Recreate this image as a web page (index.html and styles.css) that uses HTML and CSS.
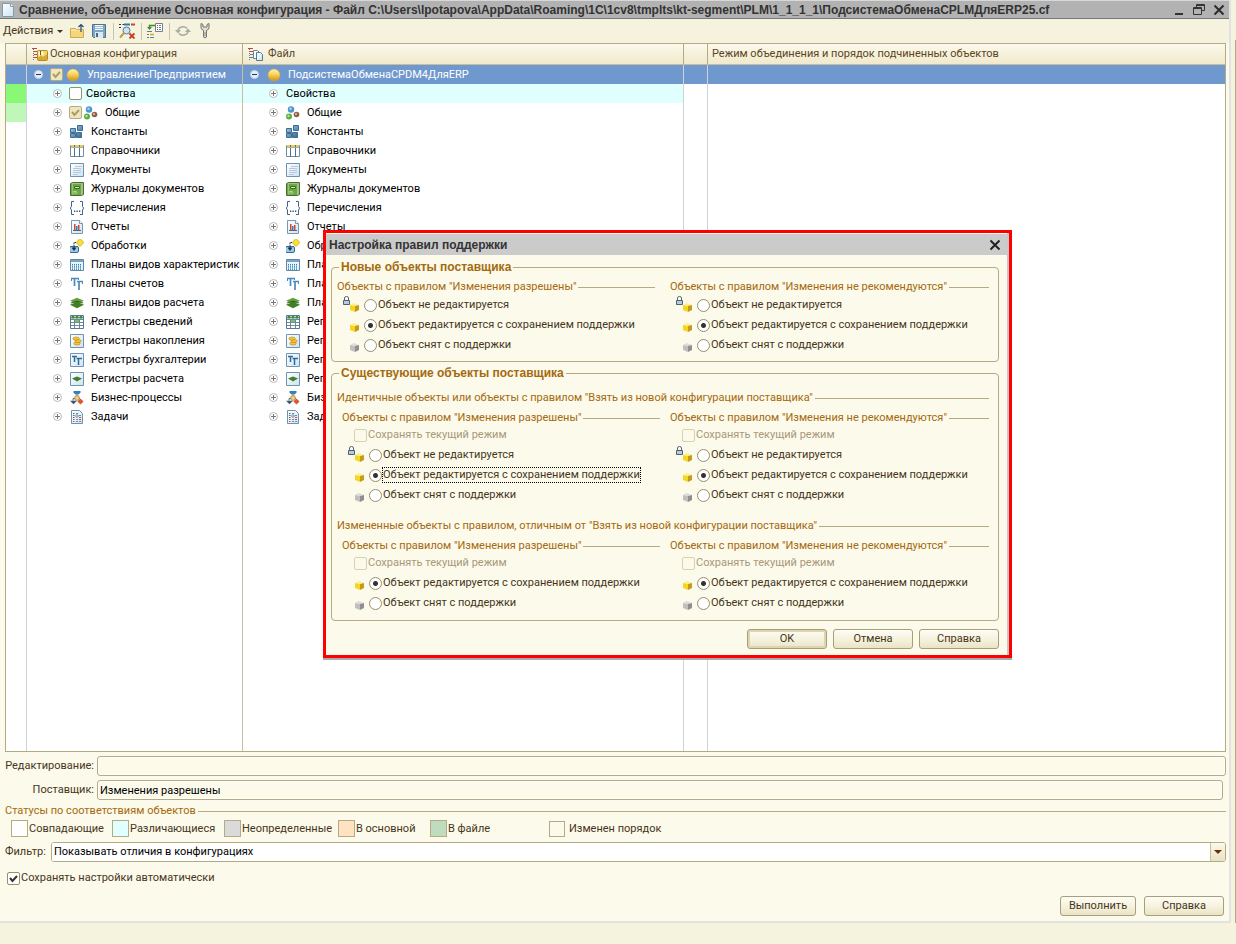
FILE: index.html
```html
<!DOCTYPE html>
<html lang="ru">
<head>
<meta charset="utf-8">
<title>Сравнение, объединение</title>
<link rel="stylesheet" href="styles.css">
</head>
<body>
<svg class="defs" aria-hidden="true">
<defs>
<linearGradient id="gold" x1="0" y1="0" x2="0" y2="1"><stop offset="0" stop-color="#fff6b8"/><stop offset=".45" stop-color="#f8d35a"/><stop offset="1" stop-color="#d08f14"/></linearGradient>
<linearGradient id="blue" x1="0" y1="0" x2="1" y2="1"><stop offset="0" stop-color="#a9cfe8"/><stop offset="1" stop-color="#2f648e"/></linearGradient>
<linearGradient id="paper" x1="0" y1="0" x2="1" y2="1"><stop offset="0" stop-color="#fff"/><stop offset="1" stop-color="#cfe2f0"/></linearGradient>
</defs>
<symbol id="plus" viewBox="0 0 9 9"><circle cx="4.5" cy="4.5" r="4" fill="#fff" stroke="#b9b9b9"/><path d="M2 4.5h5M4.5 2v5" stroke="#777"/></symbol>
<symbol id="minus" viewBox="0 0 9 9"><circle cx="4.5" cy="4.5" r="4" fill="#e4ecf6" stroke="#c4d2e6"/><path d="M2 4.5h5" stroke="#223a5c"/></symbol>
<symbol id="ball" viewBox="0 0 14 14"><circle cx="7" cy="7" r="6" fill="url(#gold)" stroke="#d9a63c" stroke-width=".6"/></symbol>
<symbol id="common" viewBox="0 0 14 14"><circle cx="5" cy="3.500" r="3.200" fill="#4c96cf"/><circle cx="4.500" cy="2.700" r="1.300" fill="#a5d2ef"/><circle cx="3" cy="10.500" r="3" fill="#58b03c"/><circle cx="2.500" cy="10" r="1.200" fill="#b2e59c"/><circle cx="10.500" cy="8.500" r="2.800" fill="#8c5f45"/><circle cx="10" cy="8" r="1.200" fill="#d2ac92"/></symbol>
<symbol id="const" viewBox="0 0 14 14"><path d="M7.500 .5h5v5h-5zM.5 3.500h5v4h-5zM.5 8.500h5v4h-5zM6.500 7.500h5v5h-5z" fill="url(#blue)" stroke="#3c6c93"/></symbol>
<symbol id="catalog" viewBox="0 0 14 14"><path d="M.5 1.500h13v11H.5z" fill="#fff" stroke="#6f8fa8"/><path d="M1 1h12v2H1z" fill="#f3cc39"/><path d="M4.500 1v12M9.500 1v12" stroke="#4e7391"/><path d="M1 3.500h12" stroke="#9db2c2"/></symbol>
<symbol id="doc" viewBox="0 0 14 14"><path d="M.5 .5h13v13H.5z" fill="url(#paper)" stroke="#6f94b3"/><path d="M5 3.500h7M3 5.500h8M3 7.500h8M3 9.500h8M3 11.500h5" stroke="#b4cadc"/></symbol>
<symbol id="journal" viewBox="0 0 14 14"><path d="M2.500 .5h11v12l-2 1H.5v-12z" fill="#a5bf85" stroke="#496c30"/><path d="M1 2h10v11H1z" fill="#6aa846"/><path d="M4.500 4.500h5v2h-5z" fill="#d7ebbb" stroke="#376d1a"/><path d="M3.500 9.500h3M3.500 11h4" stroke="#b8dc9a"/><path d="M2.500 2v11" stroke="#91c86e"/></symbol>
<symbol id="enum" viewBox="0 0 14 14"><path d="M4 .5H1.500v5L.3 7l1.200 2v4.500H4M10 .5h2.500v5L13.700 7l-1.200 2v4.500H10" fill="none" stroke="#3f6585"/><path d="M4 9.500h1.300v1.500H4zM6.500 9.500h1.300v1.500H6.500zM9 9.500h1.300v1.500H9z" fill="#2c5272"/></symbol>
<symbol id="report" viewBox="0 0 14 14"><path d="M1.500 .5h8l3 3v10h-11z" fill="url(#paper)" stroke="#7897b1"/><path d="M9.500 .5v3h3" fill="#fff" stroke="#7897b1"/><path d="M4 4h1.500v6H4zM8 5h1.500v5H8z" fill="#d5472f"/><path d="M6 6h1.500v4H6z" fill="#2e7fb3"/><path d="M3 10.500h8" stroke="#4c6a82"/></symbol>
<symbol id="process" viewBox="0 0 14 14"><rect x="-.5" y="7.500" width="9" height="6" rx="1.500" fill="#9bcae8" stroke="#356c94"/><path d="M10 -.5l4 4-4 4-4-4z" fill="#f8e032" stroke="#c79d17" stroke-width=".7"/><path d="M6 3.500H4V11" stroke="#172d42" fill="none" stroke-dasharray="1.500 .7"/><path d="M1.500 8.500h5L4 12z" fill="#172d42"/></symbol>
<symbol id="chars" viewBox="0 0 14 14"><path d="M.5 1.500h13v11H.5z" fill="#e8f3fa" stroke="#6489a8"/><path d="M1 2h12v2H1z" fill="#7aa2c2"/><path d="M2.500 6v6M4.500 6v6M6.500 6v6M8.500 6v6M10.500 6v6" stroke="#2f85b8" stroke-dasharray="1.500 .7"/></symbol>
<symbol id="accounts" viewBox="0 0 14 14"><path d="M1 1.500h8M4.500 1v8M7 4.500h6M9 4v9" stroke="#4a89ba" stroke-width="1.700"/><path d="M1.500 1v3M8.500 1v2M12.500 4v3" stroke="#4a89ba"/></symbol>
<symbol id="calc" viewBox="0 0 16 14"><path d="M0 4.500L8 1l8 3.500L8 8z" fill="#5fa33d"/><path d="M0 9l8-3.500L16 9l-8 4z" fill="#417f26"/><path d="M1 7l7-2 7 2" fill="none" stroke="#245115"/></symbol>
<symbol id="info" viewBox="0 0 14 14"><path d="M.5 .5h13v13H.5z" fill="#fff" stroke="#567b98"/><path d="M1 1h12v2.500H1z" fill="#b9cfdd"/><path d="M1.500 3l1.500-2 1.500 2zM5.500 3L7 1l1.500 2zM9.500 3L11 1l1.500 2z" fill="#3e8b28" stroke="#3e8b28"/><path d="M1 4.500h12M1 7.500h12M1 10.500h12M4.500 4v9M9.500 4v9" stroke="#6d879c"/><path d="M5 5h4v2H5z" fill="#7cc05d"/></symbol>
<symbol id="accum" viewBox="0 0 14 14"><path d="M.5 .5h13v13H.5z" fill="url(#paper)" stroke="#6f94b3"/><g fill="#f3c63c" stroke="#b5820e" stroke-width=".6"><ellipse cx="7" cy="9.500" rx="3.200" ry="1.500"/><ellipse cx="8" cy="7" rx="3.200" ry="1.500"/><ellipse cx="6" cy="4.500" rx="3.200" ry="1.500"/></g></symbol>
<symbol id="booking" viewBox="0 0 14 14"><path d="M.5 .5h13v13H.5z" fill="url(#paper)" stroke="#6f94b3"/><path d="M2 3.500h5M4.500 3v6M6.500 5.500H12M8.500 5v7" stroke="#2b6b9d" stroke-width="1.500"/></symbol>
<symbol id="calcreg" viewBox="0 0 14 14"><path d="M.5 .5h13v13H.5z" fill="url(#paper)" stroke="#6f94b3"/><path d="M2 6.500l5-2 5 2-5 3z" fill="#418029"/></symbol>
<symbol id="business" viewBox="0 0 16 16"><path d="M4 0h8v2L9.500 4h-3L4 2z" fill="#3580b4"/><path d="M8 4v2M3.500 11V8.500h8" stroke="#36576f" fill="none"/><rect x="5.500" y="5.500" width="5" height="5" rx="1.500" fill="#f2d184" stroke="#ab864c"/><path d="M0 11h8l-4 4z" fill="#43576b"/><path d="M12 8.500l3.500 3.500-3.500 3.500L8.500 12z" fill="#e1552e"/></symbol>
<symbol id="tasks" viewBox="0 0 14 14"><path d="M1.500 .5h8l3 3v10h-11z" fill="url(#paper)" stroke="#6f94b3"/><path d="M3 3.500h1.500M3 5.500h1.500M3 7.500h1.500" stroke="#47647e"/><path d="M3 9.500h1.500M3 11.500h1.500M9 7.500h2M9 9.500h2" stroke="#d2562c"/><path d="M6 3.500h2M6 9.500h2M6 11.500h2M9 11.500h2M9 5.500h2" stroke="#5d91bb"/><circle cx="7" cy="6" r="1.300" fill="none" stroke="#5d7d95" stroke-width=".8"/></symbol>
<symbol id="cube" viewBox="0 0 9 9"><path d="M0 2l4-2 5 2-4 1z" fill="#fff18a"/><path d="M0 2l5 1v6L0 7z" fill="#f4d724"/><path d="M9 2L5 3v6l4-2z" fill="#c69a1c"/></symbol>
<symbol id="graycube" viewBox="0 0 9 9"><path d="M0 2l4-2 5 2-4 1z" fill="#ddd"/><path d="M0 2l5 1v6L0 7z" fill="#bfbfbf"/><path d="M9 2L5 3v6l4-2z" fill="#8f8f8f"/></symbol>
<symbol id="lock" viewBox="0 0 7 9"><path d="M1.500 4V2q0-1.500 2-1.500t2 1.500v2" fill="none" stroke="#53677b"/><path d="M.5 4.500h6v4h-6z" fill="#b9cbd9" stroke="#4b6075"/></symbol>
<symbol id="cfg" viewBox="0 0 16 14"><path d="M0 1.500h5M2 4.500h4M2 7.500h4M2 10.500h4" stroke="#c44830"/><path d="M1.500 2v11" stroke="#6a7c8a" stroke-dasharray="1 1"/><rect x="5.500" y="3.500" width="10" height="10" rx="1" fill="#f1d870" stroke="#b08a2a"/><path d="M6.500 4.500h5v4h-5z" fill="#fff7cb"/><path d="M6 11l3-3 2 2 4-3v6H6z" fill="#d8a930"/><path d="M8.500 4v4" stroke="#60563a"/></symbol>
<symbol id="filecfg" viewBox="0 0 16 14"><path d="M0 1.500h5M2 4.500h3" stroke="#c44830"/><path d="M2 7.500h3M2 10.500h3" stroke="#5e7d95"/><path d="M1.500 2v11" stroke="#6a7c8a" stroke-dasharray="1 1"/><path d="M5.500 3.500h4l2 2v6h-6z" fill="#fff" stroke="#66859d"/><path d="M8.500 5.500h4l2 2v6h-6z" fill="url(#paper)" stroke="#547995"/></symbol>
</svg>

<main class="window">
<header class="titlebar">
<svg class="i14" viewBox="0 0 14 14"><path d="M1.500 .5h8l3 3v10h-11z" fill="url(#paper)" stroke="#7c9cb4"/><path d="M9.500 .5v3h3" fill="#fff" stroke="#7c9cb4"/></svg>
<h1>Сравнение, объединение Основная конфигурация - Файл C:\Users\lpotapova\AppData\Roaming\1C\1cv8\tmplts\kt-segment\PLM\1_1_1_1\ПодсистемаОбменаCPLMДляERP25.cf</h1>
<div class="winbtns">
<button type="button" aria-label="Свернуть"><svg viewBox="0 0 12 12"><path d="M2 10h8" stroke="#333" stroke-width="2"/></svg></button>
<button type="button" aria-label="Восстановить"><svg viewBox="0 0 12 12"><path d="M3.500 3.500v-3h8v6H9M3 1.500h9" fill="none" stroke="#333"/><path d="M.5 3.500h8v7h-8zM0 4.500h9" fill="none" stroke="#333"/></svg></button>
<button type="button" aria-label="Закрыть"><svg viewBox="0 0 12 12"><path d="M1.500 1.500l9 9M10.500 1.500l-9 9" stroke="#2c2c2c" stroke-width="2"/></svg></button>
</div>
</header>

<nav class="toolbar">
<button type="button" class="actions">Действия <i class="caret"></i></button>
<button type="button" aria-label="Открыть"><svg viewBox="0 0 16 16"><path d="M1.500 5.500h5l1 1h7v8h-13z" fill="#f9e29a" stroke="#cfa850"/><path d="M2 8h12v6H2z" fill="#f5d67c"/><path d="M12 9V1.500M9.500 4L12 1.500 14.500 4" fill="none" stroke="#244d75" stroke-width="1.200"/></svg></button>
<button type="button" aria-label="Сохранить"><svg viewBox="0 0 16 16"><path d="M1.500 1.500h13v13h-12l-1-1z" fill="#7fa6c4" stroke="#4d7392"/><path d="M4 2h8v5H4z" fill="#f4f9fc"/><path d="M4 3.500h8M4 5.500h8" stroke="#a5bccd"/><path d="M4 9h8v6H4z" fill="#dde8f0"/><path d="M5 10h2v4H5z" fill="#426987"/></svg></button>
<span class="sep"></span>
<button type="button" aria-label="Фильтр"><svg viewBox="0 0 16 16"><path d="M0 1.500h2M3.500 1.500h2M0 4.500h2" stroke="#333"/><path d="M12 1.500h4" stroke="#cf442d" stroke-width="2"/><path d="M5 1.500h6" stroke="#2b78c2" stroke-width="2"/><circle cx="7.500" cy="7.500" r="3.500" fill="#cde3f2" stroke="#587b98"/><path d="M5 10l-4 4.500" stroke="#c4984a" stroke-width="2"/><path d="M10.500 10.500l5 5M15.500 10.500l-5 5" stroke="#d3361e" stroke-width="1.800"/></svg></button>
<span class="sep"></span>
<button type="button" aria-label="Порядок"><svg viewBox="0 0 16 16"><path d="M8.500 .5h7v8h-7z" fill="#fff" stroke="#6d8394"/><path d="M10 2.500h1M10 4.500h1M10 6.500h1" stroke="#c44830"/><path d="M12 2.500h2M12 4.500h2M12 6.500h2" stroke="#69808f"/><path d="M2.500 5V2.500H8" fill="none" stroke="#3b8c29" stroke-width="1.500"/><path d="M0 4h5L2.500 7z" fill="#3b8c29"/><path d="M0 8.500h5M0 11.500h2M0 14.500h2" stroke="#6b7b86"/><path d="M3 11.500h4" stroke="#e0a52d" stroke-width="1.500"/><path d="M3 14.500h4" stroke="#3f87bc"/></svg></button>
<span class="sep"></span>
<button type="button" aria-label="Обновить"><svg viewBox="0 0 16 16"><path d="M3 7.500a5 4 0 0 1 9-2M13 8.500a5 4 0 0 1-9 2" fill="none" stroke="#a9ab9e" stroke-width="1.500"/><path d="M0 7h6l-3 3.500zM10 9h6l-3-3.500z" fill="#a9ab9e"/></svg></button>
<button type="button" aria-label="Настройка"><svg viewBox="0 0 16 16"><path d="M4 .5v4q0 2 2.500 3V14q1.500 2 3 0V7.500q2.500-1 2.500-3v-4l-2 1V4H6V1.500z" fill="#deded8" stroke="#73736b"/><path d="M6.500 10h3M6.500 12h3" stroke="#8a8a82"/></svg></button>
</nav>

<section class="content">
<div class="gridbox">
<table class="tree">
<colgroup><col class="c1"><col class="c2"><col class="c3"><col class="c4"><col></colgroup>
<thead><tr><th></th><th><div class="head"><svg><use href="#cfg"/></svg>Основная конфигурация</div></th><th><div class="head"><svg><use href="#filecfg"/></svg>Файл</div></th><th></th><th><div class="head mode">Режим объединения и порядок подчиненных объектов</div></th></tr></thead>
<tbody>
<tr class="root"><td></td><td><div class="node"><svg class="exp"><use href="#minus"/></svg><input type="checkbox" class="tan" checked aria-label="УправлениеПредприятием"><svg class="i14"><use href="#ball"/></svg><span>УправлениеПредприятием</span></div></td><td><div class="node"><svg class="exp"><use href="#minus"/></svg><svg class="i14"><use href="#ball"/></svg><span>ПодсистемаОбменаCPDM4ДляERP</span></div></td><td></td><td></td></tr>
<tr class="diff"><td></td><td><div class="node sub"><svg class="exp"><use href="#plus"/></svg><label><input type="checkbox">Свойства</label></div></td><td><div class="node sub"><svg class="exp"><use href="#plus"/></svg><span>Свойства</span></div></td><td></td><td></td></tr>
<tr class="part"><td></td><td><div class="node sub"><svg class="exp"><use href="#plus"/></svg><input type="checkbox" class="tan" checked aria-label="Общие"><svg class="i14"><use href="#common"/></svg><span>Общие</span></div></td><td><div class="node sub"><svg class="exp"><use href="#plus"/></svg><svg class="i14"><use href="#common"/></svg><span>Общие</span></div></td><td></td><td></td></tr>
<tr><td></td><td><div class="node sub"><svg class="exp"><use href="#plus"/></svg><svg class="i14"><use href="#const"/></svg><span>Константы</span></div></td><td><div class="node sub"><svg class="exp"><use href="#plus"/></svg><svg class="i14"><use href="#const"/></svg><span>Константы</span></div></td><td></td><td></td></tr>
<tr><td></td><td><div class="node sub"><svg class="exp"><use href="#plus"/></svg><svg class="i14"><use href="#catalog"/></svg><span>Справочники</span></div></td><td><div class="node sub"><svg class="exp"><use href="#plus"/></svg><svg class="i14"><use href="#catalog"/></svg><span>Справочники</span></div></td><td></td><td></td></tr>
<tr><td></td><td><div class="node sub"><svg class="exp"><use href="#plus"/></svg><svg class="i14"><use href="#doc"/></svg><span>Документы</span></div></td><td><div class="node sub"><svg class="exp"><use href="#plus"/></svg><svg class="i14"><use href="#doc"/></svg><span>Документы</span></div></td><td></td><td></td></tr>
<tr><td></td><td><div class="node sub"><svg class="exp"><use href="#plus"/></svg><svg class="i14"><use href="#journal"/></svg><span>Журналы документов</span></div></td><td><div class="node sub"><svg class="exp"><use href="#plus"/></svg><svg class="i14"><use href="#journal"/></svg><span>Журналы документов</span></div></td><td></td><td></td></tr>
<tr><td></td><td><div class="node sub"><svg class="exp"><use href="#plus"/></svg><svg class="i14"><use href="#enum"/></svg><span>Перечисления</span></div></td><td><div class="node sub"><svg class="exp"><use href="#plus"/></svg><svg class="i14"><use href="#enum"/></svg><span>Перечисления</span></div></td><td></td><td></td></tr>
<tr><td></td><td><div class="node sub"><svg class="exp"><use href="#plus"/></svg><svg class="i14"><use href="#report"/></svg><span>Отчеты</span></div></td><td><div class="node sub"><svg class="exp"><use href="#plus"/></svg><svg class="i14"><use href="#report"/></svg><span>Отчеты</span></div></td><td></td><td></td></tr>
<tr><td></td><td><div class="node sub"><svg class="exp"><use href="#plus"/></svg><svg class="i14"><use href="#process"/></svg><span>Обработки</span></div></td><td><div class="node sub"><svg class="exp"><use href="#plus"/></svg><svg class="i14"><use href="#process"/></svg><span>Обработки</span></div></td><td></td><td></td></tr>
<tr><td></td><td><div class="node sub"><svg class="exp"><use href="#plus"/></svg><svg class="i14"><use href="#chars"/></svg><span>Планы видов характеристик</span></div></td><td><div class="node sub"><svg class="exp"><use href="#plus"/></svg><svg class="i14"><use href="#chars"/></svg><span>Планы</span></div></td><td></td><td></td></tr>
<tr><td></td><td><div class="node sub"><svg class="exp"><use href="#plus"/></svg><svg class="i14"><use href="#accounts"/></svg><span>Планы счетов</span></div></td><td><div class="node sub"><svg class="exp"><use href="#plus"/></svg><svg class="i14"><use href="#accounts"/></svg><span>Планы</span></div></td><td></td><td></td></tr>
<tr><td></td><td><div class="node sub"><svg class="exp"><use href="#plus"/></svg><svg class="i14"><use href="#calc"/></svg><span>Планы видов расчета</span></div></td><td><div class="node sub"><svg class="exp"><use href="#plus"/></svg><svg class="i14"><use href="#calc"/></svg><span>Планы</span></div></td><td></td><td></td></tr>
<tr><td></td><td><div class="node sub"><svg class="exp"><use href="#plus"/></svg><svg class="i14"><use href="#info"/></svg><span>Регистры сведений</span></div></td><td><div class="node sub"><svg class="exp"><use href="#plus"/></svg><svg class="i14"><use href="#info"/></svg><span>Регистры</span></div></td><td></td><td></td></tr>
<tr><td></td><td><div class="node sub"><svg class="exp"><use href="#plus"/></svg><svg class="i14"><use href="#accum"/></svg><span>Регистры накопления</span></div></td><td><div class="node sub"><svg class="exp"><use href="#plus"/></svg><svg class="i14"><use href="#accum"/></svg><span>Регистры</span></div></td><td></td><td></td></tr>
<tr><td></td><td><div class="node sub"><svg class="exp"><use href="#plus"/></svg><svg class="i14"><use href="#booking"/></svg><span>Регистры бухгалтерии</span></div></td><td><div class="node sub"><svg class="exp"><use href="#plus"/></svg><svg class="i14"><use href="#booking"/></svg><span>Регистры</span></div></td><td></td><td></td></tr>
<tr><td></td><td><div class="node sub"><svg class="exp"><use href="#plus"/></svg><svg class="i14"><use href="#calcreg"/></svg><span>Регистры расчета</span></div></td><td><div class="node sub"><svg class="exp"><use href="#plus"/></svg><svg class="i14"><use href="#calcreg"/></svg><span>Регистры</span></div></td><td></td><td></td></tr>
<tr><td></td><td><div class="node sub"><svg class="exp"><use href="#plus"/></svg><svg class="i14"><use href="#business"/></svg><span>Бизнес-процессы</span></div></td><td><div class="node sub"><svg class="exp"><use href="#plus"/></svg><svg class="i14"><use href="#business"/></svg><span>Бизнес</span></div></td><td></td><td></td></tr>
<tr><td></td><td><div class="node sub"><svg class="exp"><use href="#plus"/></svg><svg class="i14"><use href="#tasks"/></svg><span>Задачи</span></div></td><td><div class="node sub"><svg class="exp"><use href="#plus"/></svg><svg class="i14"><use href="#tasks"/></svg><span>Задачи</span></div></td><td></td><td></td></tr>
<tr class="rest"><td></td><td></td><td></td><td></td><td></td></tr>
</tbody>
</table>
</div>

<div class="field"><label for="edit">Редактирование:</label><input id="edit" type="text" readonly></div>
<div class="field vendor"><label for="vendor">Поставщик:</label><input id="vendor" type="text" readonly value="Изменения разрешены"></div>
<h2 class="line">Статусы по соответствиям объектов</h2>
<ul class="statuses">
<li><i class="same"></i>Совпадающие</li><li><i class="differs"></i>Различающиеся</li><li><i class="unknown"></i>Неопределенные</li><li><i class="inmain"></i>В основной</li><li><i class="infile"></i>В файле</li><li class="order"><i></i>Изменен порядок</li>
</ul>
<div class="filter"><label for="filter">Фильтр:</label><div class="combo"><select id="filter"><option>Показывать отличия в конфигурациях</option></select><span class="drop"><i class="caret"></i></span></div></div>
<label class="auto"><input type="checkbox" checked>Сохранять настройки автоматически</label>
<div class="actionsrow"><button type="button" class="btn run">Выполнить</button><button type="button" class="btn">Справка</button></div>
</section>
</main>
<div class="edge"></div>

<section class="dialog" role="dialog" aria-labelledby="dlg">
<header><h2 id="dlg">Настройка правил поддержки</h2><button type="button" aria-label="Закрыть"><svg viewBox="0 0 12 12"><path d="M1.500 1.500l9 9M10.500 1.500l-9 9" stroke="#222" stroke-width="2"/></svg></button></header>
<div class="dbody">
<fieldset class="box new">
<legend>Новые объекты поставщика</legend>
<div class="cols">
<div class="rules"><h3 class="line">Объекты с правилом "Изменения разрешены"</h3>
<label><span class="ico"><svg class="lk"><use href="#lock"/></svg><svg class="cb"><use href="#cube"/></svg></span><input type="radio" name="a">Объект не редактируется</label>
<label><span class="ico"><svg class="cb"><use href="#cube"/></svg></span><input type="radio" name="a" checked>Объект редактируется с сохранением поддержки</label>
<label><span class="ico"><svg class="cb"><use href="#graycube"/></svg></span><input type="radio" name="a">Объект снят с поддержки</label></div>
<div class="rules"><h3 class="line">Объекты с правилом "Изменения не рекомендуются"</h3>
<label><span class="ico"><svg class="lk"><use href="#lock"/></svg><svg class="cb"><use href="#cube"/></svg></span><input type="radio" name="b">Объект не редактируется</label>
<label><span class="ico"><svg class="cb"><use href="#cube"/></svg></span><input type="radio" name="b" checked>Объект редактируется с сохранением поддержки</label>
<label><span class="ico"><svg class="cb"><use href="#graycube"/></svg></span><input type="radio" name="b">Объект снят с поддержки</label></div>
</div>
</fieldset>
<fieldset class="box existing">
<legend>Существующие объекты поставщика</legend>
<h3 class="line">Идентичные объекты или объекты с правилом "Взять из новой конфигурации поставщика"</h3>
<div class="cols inset">
<div class="rules"><h3 class="line">Объекты с правилом "Изменения разрешены"</h3>
<label class="keep"><input type="checkbox" disabled>Сохранять текущий режим</label>
<label><span class="ico"><svg class="lk"><use href="#lock"/></svg><svg class="cb"><use href="#cube"/></svg></span><input type="radio" name="c">Объект не редактируется</label>
<label><span class="ico"><svg class="cb"><use href="#cube"/></svg></span><input type="radio" name="c" checked><span class="focus">Объект редактируется с сохранением поддержки</span></label>
<label><span class="ico"><svg class="cb"><use href="#graycube"/></svg></span><input type="radio" name="c">Объект снят с поддержки</label></div>
<div class="rules"><h3 class="line">Объекты с правилом "Изменения не рекомендуются"</h3>
<label class="keep"><input type="checkbox" disabled>Сохранять текущий режим</label>
<label><span class="ico"><svg class="lk"><use href="#lock"/></svg><svg class="cb"><use href="#cube"/></svg></span><input type="radio" name="d">Объект не редактируется</label>
<label><span class="ico"><svg class="cb"><use href="#cube"/></svg></span><input type="radio" name="d" checked>Объект редактируется с сохранением поддержки</label>
<label><span class="ico"><svg class="cb"><use href="#graycube"/></svg></span><input type="radio" name="d">Объект снят с поддержки</label></div>
</div>
<h3 class="line second">Измененные объекты с правилом, отличным от "Взять из новой конфигурации поставщика"</h3>
<div class="cols inset">
<div class="rules"><h3 class="line">Объекты с правилом "Изменения разрешены"</h3>
<label class="keep"><input type="checkbox" disabled>Сохранять текущий режим</label>
<label><span class="ico"><svg class="cb"><use href="#cube"/></svg></span><input type="radio" name="e" checked>Объект редактируется с сохранением поддержки</label>
<label><span class="ico"><svg class="cb"><use href="#graycube"/></svg></span><input type="radio" name="e">Объект снят с поддержки</label></div>
<div class="rules"><h3 class="line">Объекты с правилом "Изменения не рекомендуются"</h3>
<label class="keep"><input type="checkbox" disabled>Сохранять текущий режим</label>
<label><span class="ico"><svg class="cb"><use href="#cube"/></svg></span><input type="radio" name="f" checked>Объект редактируется с сохранением поддержки</label>
<label><span class="ico"><svg class="cb"><use href="#graycube"/></svg></span><input type="radio" name="f">Объект снят с поддержки</label></div>
</div>
</fieldset>
<footer><button type="button" class="btn default">OK</button><button type="button" class="btn">Отмена</button><button type="button" class="btn">Справка</button></footer>
</div>
</section>
</body>
</html>
```
FILE: styles.css
```css
* { box-sizing: border-box; }
body {
  margin: 0;
  height: 100vh;
  display: flex;
  padding-bottom: 21px;
  background: #f5f2de;
  color: #46351c;
  font: 11px/14px Roboto, "Liberation Sans", sans-serif;
  overflow: hidden;
}
h1, h2, h3, ul { margin: 0; padding: 0; font: inherit; list-style: none; }
button, input, select { font: inherit; color: inherit; margin: 0; padding: 0; }
button { border: 0; background: none; }
.defs { position: absolute; width: 0; height: 0; }
.i14 { width: 14px; height: 14px; flex: none; overflow: visible; }

.window {
  flex: 1;
  min-width: 0;
  display: flex;
  flex-direction: column;
  background: #fcfaea;
  border-right: 2px solid #e2e2e4;
  border-bottom: 2px solid #e2e2e4;
}
.edge { width: 5px; margin-top: 40px; border-right: 1px solid #b5ab82; }
.titlebar {
  display: flex;
  align-items: center;
  height: 19px;
  padding: 0 4px 0 1px;
  gap: 4px;
  background: #b2b2b2;
  border-top: 1px solid #d8d8d8;
  border-bottom: 1px solid #777;
}
.titlebar h1 {
  flex: 1;
  font: bold 12px/14px "Liberation Sans", sans-serif;
  color: #333;
  white-space: nowrap;
}
.winbtns { display: flex; gap: 8px; }
.winbtns button, .winbtns svg { width: 12px; height: 12px; display: block; }

.toolbar {
  display: flex;
  align-items: center;
  height: 24px;
  padding-left: 3px;
  background: #f5f2de;
}
.toolbar button { margin-right: 6px; display: flex; align-items: center; }
.toolbar .actions { gap: 4px; }
.toolbar svg { width: 16px; height: 16px; }
.sep { width: 1px; height: 17px; margin-right: 5px; background: #c9c5b0; }
.caret {
  border: 3px solid transparent;
  border-top-color: #46351c;
  border-bottom: 0;
}

.content {
  flex: 1;
  min-height: 0;
  display: flex;
  flex-direction: column;
  padding: 0 3px 5px 5px;
}
.gridbox { flex: 1; min-height: 0; border: 1px solid #b5ab82; background: #fff; }
.tree { width: 100%; height: 100%; border-collapse: separate; border-spacing: 0; table-layout: fixed; color: #000; }
.c1 { width: 21px; }
.c2 { width: 216px; }
.c3 { width: 441px; }
.c4 { width: 24px; }
.tree th, .tree td { padding: 0; border-right: 1px solid #ccd3db; text-align: left; font-weight: normal; }
.tree td:nth-child(2) { border-right-color: #c6bf9c; }
.tree tr > :last-child { border-right: 0; }
.tree th {
  height: 21px;
  background: linear-gradient(#fbf9ec, #f1e9cc);
  border-right-color: #b5ab82;
  border-bottom: 1px solid #c6bf9c;
  color: #5a4522;
}
.tree td { height: 19px; }
.tree .rest td { height: auto; }
.head { display: flex; align-items: center; padding-left: 5px; gap: 2px; }
.head svg { width: 16px; height: 14px; }
.head.mode { padding-left: 4px; }
th:nth-child(3) .head { gap: 4px; }
.root td { background: #6f98ce; color: #fff; }
.diff td { background: #e0ffff; }
.diff td:nth-child(4), .diff td:nth-child(5) { background: #fff; }
.diff td:first-child { background: #88f876; }
.part td:first-child { background: #c0f6b8; }
.node { display: flex; align-items: center; height: 19px; padding-left: 7px; gap: 7px; white-space: nowrap; }
.node.sub { padding-left: 26px; }
.exp { width: 9px; height: 9px; flex: none; }
.node input + .i14 { margin-left: -5px; }
.root input + .i14 { margin-left: -4px; }
.root .exp + .i14 { margin-left: 1px; }
.sub .exp + .i14, .sub .exp + span { margin-left: 1px; }
.node label { display: flex; align-items: center; gap: 4px; }

input[type="checkbox"], input[type="radio"] {
  appearance: none;
  flex: none;
  width: 13px;
  height: 13px;
  border: 1px solid #97906c;
  background: #fff;
}
input[type="checkbox"] { border-radius: 2px; }
input[type="checkbox"]:checked {
  background: #fff url("data:image/svg+xml,%3Csvg xmlns='http://www.w3.org/2000/svg' viewBox='0 0 11 11'%3E%3Cpath d='M2 5l2.500 3L9 3' fill='none' stroke='%23333' stroke-width='2'/%3E%3C/svg%3E");
}
input.tan:checked {
  border-color: #b5ab82;
  background: #efe6bd url("data:image/svg+xml,%3Csvg xmlns='http://www.w3.org/2000/svg' viewBox='0 0 11 11'%3E%3Cpath d='M2 5l2.500 3L9 3' fill='none' stroke='%23a99e6c' stroke-width='2'/%3E%3C/svg%3E");
}
input[type="checkbox"]:disabled { border-color: #d8d2b5; background: transparent; }
input[type="radio"] { border-radius: 50%; }
input[type="radio"]:checked { background: radial-gradient(circle, #333 0 2px, #fff 3px); }

.field { display: flex; align-items: center; margin-top: 4px; gap: 3px; }
.field label { width: 89px; text-align: right; }
.field input {
  flex: 1;
  height: 20px;
  padding: 0 2px;
  border: 1px solid #b5ab82;
  border-radius: 3px;
  background: #fcfaea;
  box-shadow: inset 0 0 0 1px #fff;
  color: #000;
}
.vendor { margin-right: 3px; }
.line { display: flex; align-items: center; gap: 2px; color: #a5690f; white-space: nowrap; }
.line::after { content: ""; flex: 1; border-top: 1px solid #b5ab82; }
.content > .line { margin-top: 4px; }
.statuses {
  display: grid;
  grid-template-columns: 101px 112px 114px 92px 119px auto;
  align-items: center;
  padding-left: 6px;
  margin-top: 2px;
}
.statuses li { display: flex; align-items: center; gap: 1px; white-space: nowrap; }
.statuses i { width: 17px; height: 17px; border: 1px solid #b5ab82; }
.statuses .order { gap: 4px; }
.statuses .order i { width: 16px; height: 16px; }
.same { background: #fff; }
.differs { background: #e0ffff; }
.unknown { background: #dadada; }
.inmain { background: #ffe2c2; }
.infile { background: #bfdcbf; }
.filter { display: flex; align-items: center; gap: 5px; margin-top: 5px; }
.combo {
  flex: 1;
  display: flex;
  height: 20px;
  border: 1px solid #b5ab82;
  border-radius: 3px;
  background: #fff;
  overflow: hidden;
}
.combo select { flex: 1; appearance: none; border: 0; background: #fff; color: #000; padding-left: 2px; }
.drop {
  display: grid;
  place-items: center;
  width: 15px;
  border-left: 1px solid #c6bf9c;
  background: linear-gradient(#fbf9ec, #e9e2c4);
}
.drop .caret { border-width: 4px 4px 0; border-top-color: #6b2e00; }
.auto { display: flex; align-items: center; gap: 1px; margin: 9px 0 0 2px; }
.actionsrow { display: flex; justify-content: flex-end; gap: 8px; margin: 11px 2px 0 0; }
.btn {
  width: 80px;
  height: 20px;
  border: 1px solid #a89f78;
  border-radius: 3px;
  background: linear-gradient(#fefdf6, #f4f0da 60%, #e9e3c6);
  text-align: center;
}
.btn.run { width: 76px; }
.btn.default { box-shadow: inset 0 0 0 2px #ddd4b0; }

.dialog {
  position: absolute;
  left: 323px;
  top: 230px;
  width: 689px;
  border: 3px solid #f00;
  background: #fcfaea;
  box-shadow: inset -2px 0 #c8c8cc, 0 2px #aaa;
}
.dialog header {
  display: flex;
  align-items: center;
  justify-content: space-between;
  height: 21px;
  margin: 1px 2px 0 0;
  padding: 0 6px 0 3px;
  background: #cbcbcb;
}
.dialog header h2 { font: bold 12px/14px "Liberation Sans", sans-serif; color: #333; }
.dialog header button, .dialog header svg { width: 12px; height: 12px; display: block; }
.dbody { padding: 5px 10px 6px 5px; }
.box { margin: 0; border: 1px solid #b5ab82; border-radius: 4px; min-width: 0; padding: 0 9px 7px 5px; }
.box legend { margin-left: 2px; padding: 0 2px; font: bold 12px/14px "Liberation Sans", sans-serif; color: #a5690f; }
.new { padding-top: 6px; padding-bottom: 6px; }
.new h3 { margin-bottom: 1px; }
.existing { margin-top: 4px; padding-top: 11px; }
.cols { display: grid; grid-template-columns: 318px 1fr; column-gap: 15px; }
.cols.inset { padding-left: 5px; column-gap: 10px; margin-top: 6px; }
.rules label { display: flex; align-items: center; height: 20px; gap: 1px; }
.rules .keep { padding-left: 12px; color: #a8987a; }
.ico { display: block; position: relative; width: 26px; height: 18px; }
.cb { position: absolute; left: 13px; top: 7px; width: 9px; height: 9px; }
.lk { position: absolute; left: 6px; top: 0; width: 7px; height: 9px; }
.focus { outline: 1px dotted #000; }
.second { margin-top: 14px; }
.dialog footer { display: flex; justify-content: flex-end; gap: 6px; margin-top: 8px; }
```
